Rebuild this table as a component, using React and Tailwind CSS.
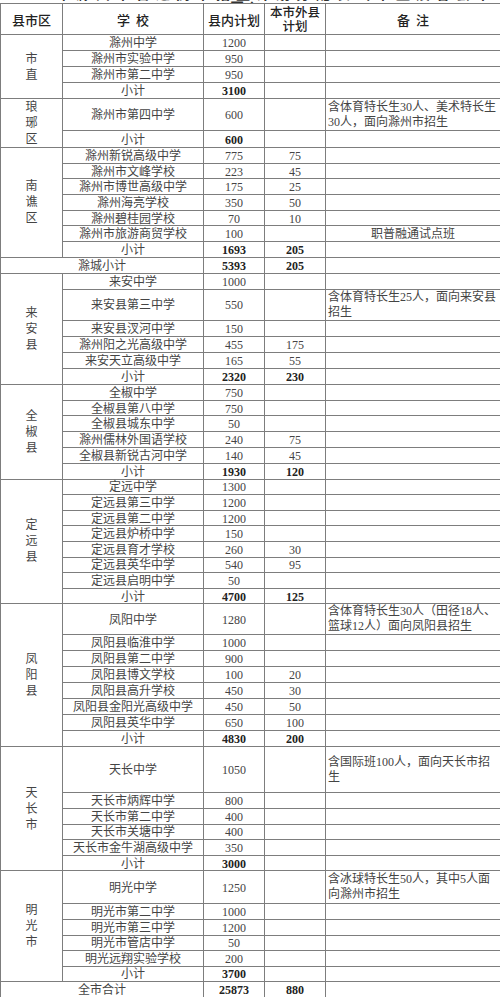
import React from 'react';

const groups = [
  {
    name: '市直',
    rows: [
      { s: '滁州中学', a: '1200', h: 'h-[16px]' },
      { s: '滁州市实验中学', a: '950', h: 'h-[16px]' },
      { s: '滁州市第二中学', a: '950', h: 'h-[16px]' },
      { s: '小计', a: '3100', t: true, h: 'h-[16px]' },
    ],
  },
  {
    name: '琅琊区',
    rows: [
      { s: '滁州市第四中学', a: '600', note: '含体育特长生30人、美术特长生30人，面向滁州市招生', h: 'h-[31px]' },
      { s: '小计', a: '600', t: true, h: 'h-[16px]' },
    ],
  },
  {
    name: '南谯区',
    rows: [
      { s: '滁州新锐高级中学', a: '775', b: '75', h: 'h-[15.7px]' },
      { s: '滁州市文峰学校', a: '223', b: '45', h: 'h-[15.7px]' },
      { s: '滁州市博世高级中学', a: '175', b: '25', h: 'h-[15.7px]' },
      { s: '滁州海亮学校', a: '350', b: '50', h: 'h-[15.7px]' },
      { s: '滁州碧桂园学校', a: '70', b: '10', h: 'h-[15.7px]' },
      { s: '滁州市旅游商贸学校', a: '100', center: '职普融通试点班', h: 'h-[15.7px]' },
      { s: '小计', a: '1693', b: '205', t: true, h: 'h-[15.7px]' },
    ],
  },
  { sum: '滁城小计', a: '5393', b: '205', h: 'h-[16px]' },
  {
    name: '来安县',
    rows: [
      { s: '来安中学', a: '1000', h: 'h-[16px]' },
      { s: '来安县第三中学', a: '550', note: '含体育特长生25人，面向来安县招生', h: 'h-[31px]' },
      { s: '来安县汊河中学', a: '150', h: 'h-[16px]' },
      { s: '滁州阳之光高级中学', a: '455', b: '175', h: 'h-[16px]' },
      { s: '来安天立高级中学', a: '165', b: '55', h: 'h-[16px]' },
      { s: '小计', a: '2320', b: '230', t: true, h: 'h-[16px]' },
    ],
  },
  {
    name: '全椒县',
    rows: [
      { s: '全椒中学', a: '750', h: 'h-[15.8px]' },
      { s: '全椒县第八中学', a: '750', h: 'h-[15.8px]' },
      { s: '全椒县城东中学', a: '50', h: 'h-[15.8px]' },
      { s: '滁州儒林外国语学校', a: '240', b: '75', h: 'h-[15.8px]' },
      { s: '全椒县新锐古河中学', a: '140', b: '45', h: 'h-[15.8px]' },
      { s: '小计', a: '1930', b: '120', t: true, h: 'h-[15.8px]' },
    ],
  },
  {
    name: '定远县',
    rows: [
      { s: '定远中学', a: '1300', h: 'h-[15.6px]' },
      { s: '定远县第三中学', a: '1200', h: 'h-[15.6px]' },
      { s: '定远县第二中学', a: '1200', h: 'h-[15.6px]' },
      { s: '定远县炉桥中学', a: '150', h: 'h-[15.6px]' },
      { s: '定远县育才学校', a: '260', b: '30', h: 'h-[15.6px]' },
      { s: '定远县英华中学', a: '540', b: '95', h: 'h-[15.6px]' },
      { s: '定远县启明中学', a: '50', h: 'h-[15.6px]' },
      { s: '小计', a: '4700', b: '125', t: true, h: 'h-[15.6px]' },
    ],
  },
  {
    name: '凤阳县',
    rows: [
      { s: '凤阳中学', a: '1280', note: '含体育特长生30人（田径18人、篮球12人）面向凤阳县招生', h: 'h-[31px]' },
      { s: '凤阳县临淮中学', a: '1000', h: 'h-[16px]' },
      { s: '凤阳县第二中学', a: '900', h: 'h-[16px]' },
      { s: '凤阳县博文学校', a: '100', b: '20', h: 'h-[16px]' },
      { s: '凤阳县高升学校', a: '450', b: '30', h: 'h-[16px]' },
      { s: '凤阳县金阳光高级中学', a: '450', b: '50', h: 'h-[16px]' },
      { s: '凤阳县英华中学', a: '650', b: '100', h: 'h-[16px]' },
      { s: '小计', a: '4830', b: '200', t: true, h: 'h-[16px]' },
    ],
  },
  {
    name: '天长市',
    rows: [
      { s: '天长中学', a: '1050', note: '含国际班100人，面向天长市招生', h: 'h-[46px]' },
      { s: '天长市炳辉中学', a: '800', h: 'h-[15.6px]' },
      { s: '天长市第二中学', a: '400', h: 'h-[15.6px]' },
      { s: '天长市关塘中学', a: '400', h: 'h-[15.6px]' },
      { s: '天长市金牛湖高级中学', a: '350', h: 'h-[15.6px]' },
      { s: '小计', a: '3000', t: true, h: 'h-[15.6px]' },
    ],
  },
  {
    name: '明光市',
    rows: [
      { s: '明光中学', a: '1250', note: '含冰球特长生50人，其中5人面向滁州市招生', h: 'h-[33px]' },
      { s: '明光市第二中学', a: '1000', h: 'h-[15.6px]' },
      { s: '明光市第三中学', a: '1200', h: 'h-[15.6px]' },
      { s: '明光市管店中学', a: '50', h: 'h-[15.6px]' },
      { s: '明光远翔实验学校', a: '200', h: 'h-[15.6px]' },
      { s: '小计', a: '3700', t: true, h: 'h-[15.6px]' },
    ],
  },
  { sum: '全市合计', a: '25873', b: '880', h: 'h-[16px]' },
];

const cell = 'border border-[#7d7d7d] p-0 text-center align-middle leading-[13px]';

function T({ children }) {
  return <div className="h-[13px] pt-[1px] leading-[12px] whitespace-nowrap">{children}</div>;
}

function Row({ r, group, first }) {
  return (
    <tr className={r.h}>
      {first && (
        <td rowSpan={group.rows.length} className={cell}>
          {group.name.split('').map((c, i) => (
            <div key={i} className="leading-[16px]">{c}</div>
          ))}
        </td>
      )}
      <td className={cell}><T>{r.s}</T></td>
      <td className={`${cell} ${r.t ? 'font-bold text-[#222]' : ''}`}><T>{r.a}</T></td>
      <td className={`${cell} ${r.t ? 'font-bold text-[#222]' : ''}`}><T>{r.b || ''}</T></td>
      <td className={`${cell} ${r.note ? '!text-left pl-[2px] pr-[1px] !leading-[15px]' : ''}`}>
        {r.note || (r.center ? <T>{r.center}</T> : '')}
      </td>
    </tr>
  );
}

export default function App() {
  return (
    <div
      className="w-[500px] h-[997px] overflow-hidden bg-white text-[#444] text-[12px] leading-[13px]"
      style={{ fontFamily: '"Liberation Serif", "Noto Sans CJK SC", serif' }}
    >
      <div className="h-[3px] overflow-hidden">
        <div className="-mt-[12px] text-center text-[14px] font-bold tracking-[6px] leading-[14px] text-[#333]">
          2023年滁州市普通高中招生计划分配表（市直及各县市区）
        </div>
      </div>
      <table className="w-[500px] table-fixed border-collapse">
        <colgroup>
          <col className="w-[62px]" />
          <col className="w-[141px]" />
          <col className="w-[61px]" />
          <col className="w-[61px]" />
          <col className="w-[175px]" />
        </colgroup>
        <tbody>
          <tr className="h-[31px]" style={{ fontFamily: '"Noto Sans CJK SC", sans-serif' }}>
            <td className={`${cell} text-[13px] font-medium text-[#222]`}>县市区</td>
            <td className={`${cell} text-[13px] font-medium text-[#222]`}>学&nbsp;&nbsp;校</td>
            <td className={`${cell} text-[13px] font-medium text-[#222]`}>县内计划</td>
            <td className={`${cell} text-[12.5px] font-medium text-[#222] !leading-[14px]`}>
              本市外县
              <br />
              计划
            </td>
            <td className={`${cell} text-[13px] font-medium text-[#222]`}>备&nbsp;&nbsp;注</td>
          </tr>
          {groups.map((g, gi) =>
            g.sum ? (
              <tr key={gi} className={g.h}>
                <td colSpan={2} className={cell}><T>{g.sum}</T></td>
                <td className={`${cell} font-bold text-[#222]`}><T>{g.a}</T></td>
                <td className={`${cell} font-bold text-[#222]`}><T>{g.b}</T></td>
                <td className={cell}></td>
              </tr>
            ) : (
              g.rows.map((r, ri) => <Row key={gi + '-' + ri} r={r} group={g} first={ri === 0} />)
            )
          )}
        </tbody>
      </table>
    </div>
  );
}
